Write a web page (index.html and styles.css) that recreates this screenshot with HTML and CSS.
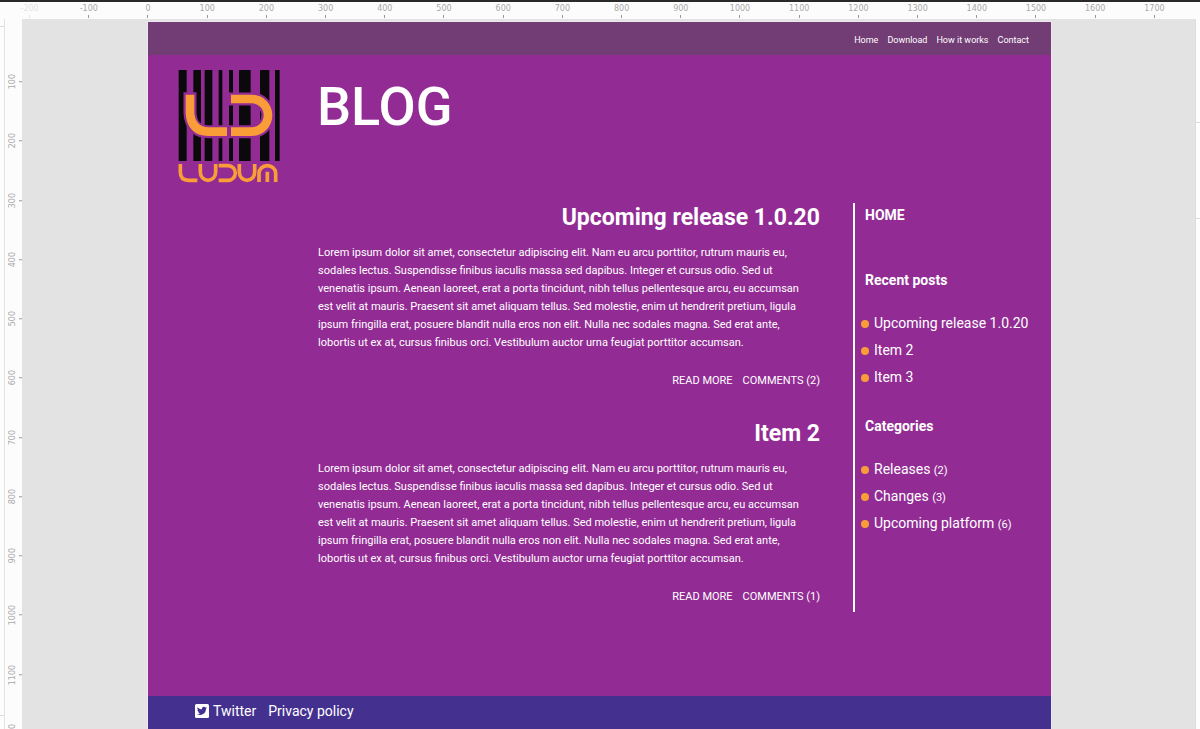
FILE: index.html
```
<!DOCTYPE html>
<html lang="en">
<head>
  <meta charset="UTF-8" />
  <meta name="viewport" content="width=device-width, initial-scale=1.0" />
  <title>Ludum - Blog</title>
  <link rel="stylesheet" href="styles.css">
</head>
<body>
  <div class="ruler-top">
    <span class="faded">-200</span><span>-100</span><span>0</span><span>100</span><span>200</span>
    <span>300</span><span>400</span><span>500</span><span>600</span><span>700</span>
    <span>800</span><span>900</span><span>1000</span><span>1100</span><span>1200</span>
    <span>1300</span><span>1400</span><span>1500</span><span>1600</span><span>1700</span>
  </div>
  <div class="workspace">
    <div class="gutter gutter-left"></div>
    <div class="ruler-left">
      <span>100</span><span>200</span><span>300</span><span>400</span>
      <span>500</span><span>600</span><span>700</span><span>800</span>
      <span>900</span><span>1000</span><span>1100</span><span>1200</span>
    </div>
    <div class="artboard">
      <nav class="topnav">
        <a href="#">Home</a>
        <a href="#">Download</a>
        <a href="#">How it works</a>
        <a href="#">Contact</a>
      </nav>
      <header class="masthead">
        <a class="logo" href="#" aria-label="Ludum">
          <svg viewBox="39 27 306 342" width="102" height="114">
            <!-- barcode -->
            <path fill="#0b090c" d="M41 30h24v273H41zM85 30h23v273H85zM119 30h23v273h-23zM161 30h11v273h-11zM192 30h12v273h-12zM222 30h35v273h-35zM285 30h28v273h-28zM330 30h14v273h-14z"/>
            <g fill="none" stroke="#922c94" stroke-width="39">
              <path d="M75 97V160Q79 215 130 215H192"/>
              <path d="M191 117H260A49 49 0 0 1 260 215H191"/>
            </g>
            <g fill="none" stroke="#f99d38" stroke-width="26">
              <path d="M75 104V160Q79 213 130 215H186"/>
              <path d="M198 117H260A49 49 0 0 1 260 215H198"/>
            </g>
            <g fill="none" stroke="#f99d38" stroke-width="11">
              <path d="M46 312V336Q46 361 71 361H97"/>
              <path d="M106 312V337A23 24 0 0 0 152 337V312"/>
              <path d="M161 317H189A22 22 0 0 1 189 361H161"/>
              <path d="M223 312V337A23 24 0 0 0 269 337V312"/>
              <path d="M282 366V340A25 23 0 0 1 332 340V366M307 335V366"/>
            </g>
          </svg>
        </a>
        <h1>BLOG</h1>
      </header>
      <div class="columns">
        <main>
          <article>
            <h2>Upcoming release 1.0.20</h2>
            <p>Lorem ipsum dolor sit amet, consectetur adipiscing elit. Nam eu arcu porttitor, rutrum mauris eu,<br>
            sodales lectus. Suspendisse finibus iaculis massa sed dapibus. Integer et cursus odio. Sed ut<br>
            venenatis ipsum. Aenean laoreet, erat a porta tincidunt, nibh tellus pellentesque arcu, eu accumsan<br>
            est velit at mauris. Praesent sit amet aliquam tellus. Sed molestie, enim ut hendrerit pretium, ligula<br>
            ipsum fringilla erat, posuere blandit nulla eros non elit. Nulla nec sodales magna. Sed erat ante,<br>
            lobortis ut ex at, cursus finibus orci. Vestibulum auctor urna feugiat porttitor accumsan.</p>
            <div class="actions">
              <a href="#">READ MORE</a>
              <a href="#">COMMENTS (2)</a>
            </div>
          </article>
          <article>
            <h2>Item 2</h2>
            <p>Lorem ipsum dolor sit amet, consectetur adipiscing elit. Nam eu arcu porttitor, rutrum mauris eu,<br>
            sodales lectus. Suspendisse finibus iaculis massa sed dapibus. Integer et cursus odio. Sed ut<br>
            venenatis ipsum. Aenean laoreet, erat a porta tincidunt, nibh tellus pellentesque arcu, eu accumsan<br>
            est velit at mauris. Praesent sit amet aliquam tellus. Sed molestie, enim ut hendrerit pretium, ligula<br>
            ipsum fringilla erat, posuere blandit nulla eros non elit. Nulla nec sodales magna. Sed erat ante,<br>
            lobortis ut ex at, cursus finibus orci. Vestibulum auctor urna feugiat porttitor accumsan.</p>
            <div class="actions">
              <a href="#">READ MORE</a>
              <a href="#">COMMENTS (1)</a>
            </div>
          </article>
        </main>
        <aside>
          <a class="home" href="#">HOME</a>
          <h3>Recent posts</h3>
          <ul>
            <li><a href="#">Upcoming release 1.0.20</a></li>
            <li><a href="#">Item 2</a></li>
            <li><a href="#">Item 3</a></li>
          </ul>
          <h3>Categories</h3>
          <ul>
            <li><a href="#">Releases <small>(2)</small></a></li>
            <li><a href="#">Changes <small>(3)</small></a></li>
            <li><a href="#">Upcoming platform <small>(6)</small></a></li>
          </ul>
        </aside>
      </div>
      <footer>
        <a class="twitter" href="#">
          <svg viewBox="0 0 448 448" width="14" height="14">
            <rect width="448" height="448" rx="48" fill="#fff"/>
            <path fill="#44318f" d="M384 120c-12 5-25 9-38 11 14-8 24-21 29-37-13 8-27 13-42 16a66 66 0 0 0-112 60c-55-3-103-29-136-69-18 30-9 68 20 88-11 0-21-3-30-8 0 32 22 59 53 66-10 3-20 3-30 1 8 26 33 45 62 46a133 133 0 0 1-98 27c29 19 64 30 101 30 122 0 191-103 187-197 14-9 25-21 34-34z"/>
          </svg>
          Twitter
        </a>
        <a href="#">Privacy policy</a>
      </footer>
    </div>
    <div class="gutter gutter-right"></div>
  </div>
</body>
</html>
```
FILE: styles.css
```
* {
  box-sizing: border-box;
}
body {
  margin: 0;
  height: 100vh;
  display: flex;
  flex-direction: column;
  overflow: hidden;
  background-color: #e3e3e3;
  font-family: "Roboto", sans-serif;
  color: #fff;
}
a {
  color: inherit;
  text-decoration: none;
}

/* rulers */
.ruler-top {
  display: grid;
  grid-template-columns: repeat(20, 1fr);
  height: 19px;
  padding-right: 16px;
  border-top: 2px solid #2b2a2b;
  background-color: #fcfcfc;
}
.ruler-top span,
.ruler-left span {
  display: flex;
  align-items: center;
  font-family: "DejaVu Sans", sans-serif;
  font-size: 8px;
  line-height: 13px;
  color: #aaa;
}
.ruler-top span {
  flex-direction: column;
}
.ruler-top .faded {
  color: #e4e4e4;
}
.ruler-top span::after {
  content: "";
  width: 1px;
  height: 3px;
  background-color: #999;
}
.ruler-top .faded::after {
  background-color: #e4e4e4;
}
.workspace {
  flex: 1;
  min-height: 0;
  display: flex;
}
.ruler-left {
  display: grid;
  grid-template-rows: repeat(12, 1fr);
  flex: none;
  width: 17px;
  height: calc(100vh + 15px);
  padding-top: 33px;
  background-color: #fcfcfc;
}
.ruler-left span {
  writing-mode: vertical-rl;
  transform: rotate(180deg);
  flex-direction: column;
  justify-content: flex-end;
}
.ruler-left span::after {
  content: "";
  width: 3px;
  height: 1px;
  background-color: #999;
}
.gutter {
  flex: none;
  width: 5px;
  background-color: #fdfdfd;
}
.gutter-left {
  border-right: 1px solid #e3e3e3;
}
.gutter-right {
  border-left: 1px solid #ddd;
}
.gutter::before,
.gutter::after {
  content: "";
  display: block;
  height: 1px;
  background-color: #ddd;
}
.gutter-left::before {
  margin-top: 7px;
}
.gutter-left::after {
  margin-top: 688px;
}
.gutter-right::before {
  margin-top: 103px;
}
.gutter-right::after {
  margin-top: 95px;
}

/* page */
.artboard {
  flex: 1;
  min-width: 0;
  display: flex;
  flex-direction: column;
  margin: 3px 144px 0 126px;
  background-color: #922c94;
  box-shadow: 0 0 0 1px #efe6ef;
}
.topnav {
  display: flex;
  justify-content: flex-end;
  gap: 9px;
  padding: 12px 22px 8px;
  background-color: #723c74;
  font-size: 9px;
  line-height: 13px;
}
.masthead {
  display: flex;
  padding: 14px 30px 0;
}
.logo svg {
  display: block;
}
h1 {
  margin: 6px 0 0 37px;
  font-size: 54px;
  line-height: 64px;
  font-weight: 500;
}
.columns {
  display: flex;
  justify-content: space-between;
  padding: 20px 0 0 170px;
}
main {
  flex: 1;
  min-width: 0;
  padding-top: 1px;
}
article {
  margin-bottom: 30px;
}
h2 {
  margin: 0 0 12px;
  font-size: 23px;
  line-height: 28px;
  text-align: right;
}
p {
  margin: 0;
  font-size: 11px;
  line-height: 18px;
}
.actions {
  display: flex;
  justify-content: flex-end;
  gap: 10px;
  margin-top: 20px;
  font-size: 11px;
  line-height: 18px;
}
aside {
  width: 198px;
  height: 409px;
  margin-left: 33px;
  padding: 1px 0 0 10px;
  border-left: 2px solid #fff;
}
.home,
h3 {
  display: block;
  margin: 0;
  font-size: 14px;
  line-height: 22px;
  font-weight: 700;
}
h3 {
  margin-top: 43px;
}
ul {
  margin: 19px 0 0 -4px;
  padding: 0;
  list-style: none;
}
ul + h3 {
  margin-top: 24px;
}
li {
  display: flex;
  align-items: center;
  gap: 5px;
  font-size: 14px;
  line-height: 27px;
}
li::before {
  content: "";
  width: 8px;
  height: 8px;
  border-radius: 50%;
  background-color: #f99d38;
}
li a {
  height: 27px;
}
small {
  font-size: 11px;
}
footer {
  display: flex;
  gap: 12px;
  margin-top: auto;
  padding: 5px 47px 8px;
  background-color: #44318f;
  font-size: 14px;
  line-height: 20px;
}
.twitter {
  display: flex;
  align-items: center;
  gap: 4px;
}
```
